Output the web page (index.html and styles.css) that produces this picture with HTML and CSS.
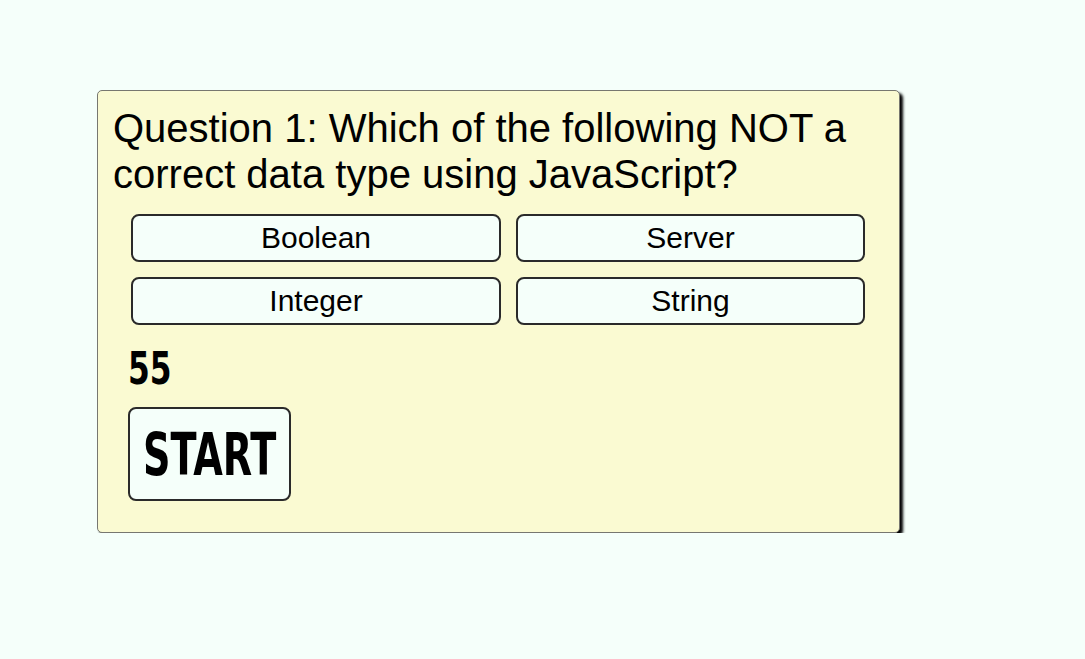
FILE: index.html
```html
<!DOCTYPE html>
<html>
<head>
<meta charset="utf-8">
<link rel="stylesheet" href="styles.css">
</head>
<body>
<div class="page">
  <div class="card">
    <h1 class="question">Question 1: Which of the following NOT a correct data type using JavaScript?</h1>
    <div class="answers">
      <button class="answer">Boolean</button>
      <button class="answer">Server</button>
      <button class="answer">Integer</button>
      <button class="answer">String</button>
    </div>
    <div class="timer"><span class="timer-text">55</span></div>
    <button class="start"><span class="start-text">START</span></button>
  </div>
</div>
</body>
</html>
```

FILE: styles.css
```css
html, body {
  margin: 0;
  padding: 0;
  background: #f5fffa;
}
body {
  font-family: "Liberation Sans", Arial, sans-serif;
  color: #000;
}
.page {
  padding: 90px 0 0 97px;
}
.card {
  box-sizing: border-box;
  width: 803px;
  height: 443px;
  background: #fafad2;
  border: 1px solid #777770;
  border-radius: 5px;
  box-shadow: 3px 3px 3px #000;
  padding: 14px 16px 0 15px;
}
.question {
  margin: 0;
  font-weight: normal;
  font-size: 40px;
  line-height: 46px;
}
.answers {
  display: grid;
  grid-template-columns: 370px 349px;
  column-gap: 15px;
  row-gap: 15px;
  margin: 17px 0 0 18px;
}
.answer {
  box-sizing: border-box;
  height: 48px;
  background: #f5fffa;
  border: 2px solid #2a2a2a;
  border-radius: 8px;
  font-family: "Liberation Sans", Arial, sans-serif;
  font-size: 30px;
  color: #000;
  padding: 0;
}
.timer {
  margin: 22px 0 0 15px;
  height: 44px;
  font-family: "DejaVu Sans Condensed", "DejaVu Sans", sans-serif;
  font-weight: bold;
  font-stretch: condensed;
  font-size: 44px;
  line-height: 44px;
}
.timer-text {
  display: inline-block;
  transform: scaleX(0.79);
  transform-origin: left center;
}
.start {
  display: flex;
  align-items: center;
  justify-content: center;
  box-sizing: border-box;
  margin: 16px 0 0 15px;
  width: 163px;
  height: 94px;
  background: #f5fffa;
  border: 2px solid #2a2a2a;
  border-radius: 8px;
  font-family: "DejaVu Sans Condensed", "DejaVu Sans", sans-serif;
  font-weight: bold;
  font-stretch: condensed;
  font-size: 59px;
  line-height: 59px;
  color: #000;
  padding: 0;
}
.start-text {
  display: inline-block;
  transform: scaleX(0.72);
  transform-origin: center center;
}
```
